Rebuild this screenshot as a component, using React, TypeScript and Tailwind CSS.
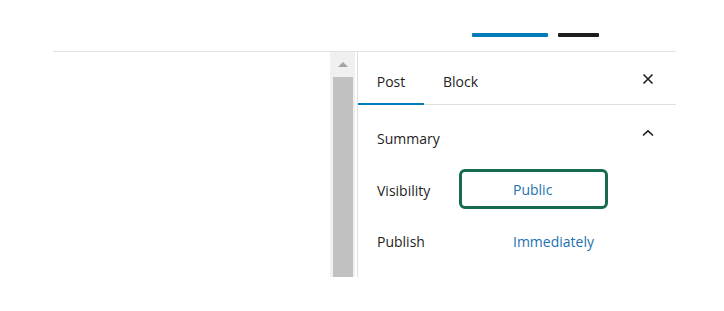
import React from "react";

export default function App() {
  return (
    <div className="w-[724px] h-[311px] bg-white relative text-[#1e1e1e]" style={{ fontFamily: '"Open Sans", "Noto Sans", sans-serif' }}>
      <div className="h-[51px] flex items-start pt-[33px] pl-[472px] gap-[10px]">
        <div className="w-[76px] h-[4px] bg-[#007cba] rounded-[1px]" />
        <div className="w-[41px] h-[4px] bg-[#1e1e1e] rounded-[1px]" />
      </div>
      <div className="ml-[53px] w-[623px] h-[226px] border-t-[1px] border-[#e2e2e2] flex">
        <div className="w-[277px]" />
        <div className="w-[25px] bg-[#f0f0f0] flex flex-col items-center">
          <div className="h-[25px] flex items-center justify-center">
            <div className="w-0 h-0 border-l-[5px] border-r-[5px] border-b-[5px] border-l-transparent border-r-transparent border-b-[#a3a3a3]" />
          </div>
          <div className="w-[20px] flex-1 bg-[#c1c1c1]" />
        </div>
        <div className="w-[2px] bg-white" />
        <div className="flex-1 border-l border-[#e0e0e0] flex flex-col">
          <div className="h-[53px] flex items-stretch border-b border-[#e0e0e0] relative">
            <div className="w-[66px] flex items-center justify-center text-[14px] pt-[7px] relative">
              Post
              <div className="absolute left-0 right-0 -bottom-[1px] h-[2px] bg-[#007cba]" />
            </div>
            <div className="px-[19px] flex items-center text-[14px] pt-[7px]">Block</div>
            <div className="flex-1" />
            <div className="w-[54px] flex items-center justify-center pr-[2px] pt-[1px]">
              <svg width="12" height="12" viewBox="0 0 12 12">
                <path d="M1.5 1.5 L10.5 10.5 M10.5 1.5 L1.5 10.5" stroke="#1e1e1e" strokeWidth="1.6" />
              </svg>
            </div>
          </div>
          <div className="h-[64px] flex items-center pl-[19px] pr-[22px]">
            <span className="text-[14px] flex-1 pt-[2px]">Summary</span>
            <svg width="12" height="8" viewBox="0 0 12 8" className="-mt-[8px]">
              <path d="M1 6.5 L6 1.8 L11 6.5" stroke="#1e1e1e" strokeWidth="1.6" fill="none" />
            </svg>
          </div>
          <div className="flex items-center pl-[19px] h-[40px]">
            <span className="w-[82px] text-[14px] pt-[2px]">Visibility</span>
            <div className="w-[149px] h-[40px] border-[3px] border-[#176b4d] rounded-[6px] flex items-center pl-[51px] pt-[1px] text-[14px] text-[#2271b1]">
              Public
            </div>
          </div>
          <div className="flex items-center pl-[19px] h-[20px] mt-[22px]">
            <span className="w-[82px] text-[14px]">Publish</span>
            <span className="pl-[54px] text-[14px] text-[#2271b1]">Immediately</span>
          </div>
        </div>
      </div>
    </div>
  );
}
